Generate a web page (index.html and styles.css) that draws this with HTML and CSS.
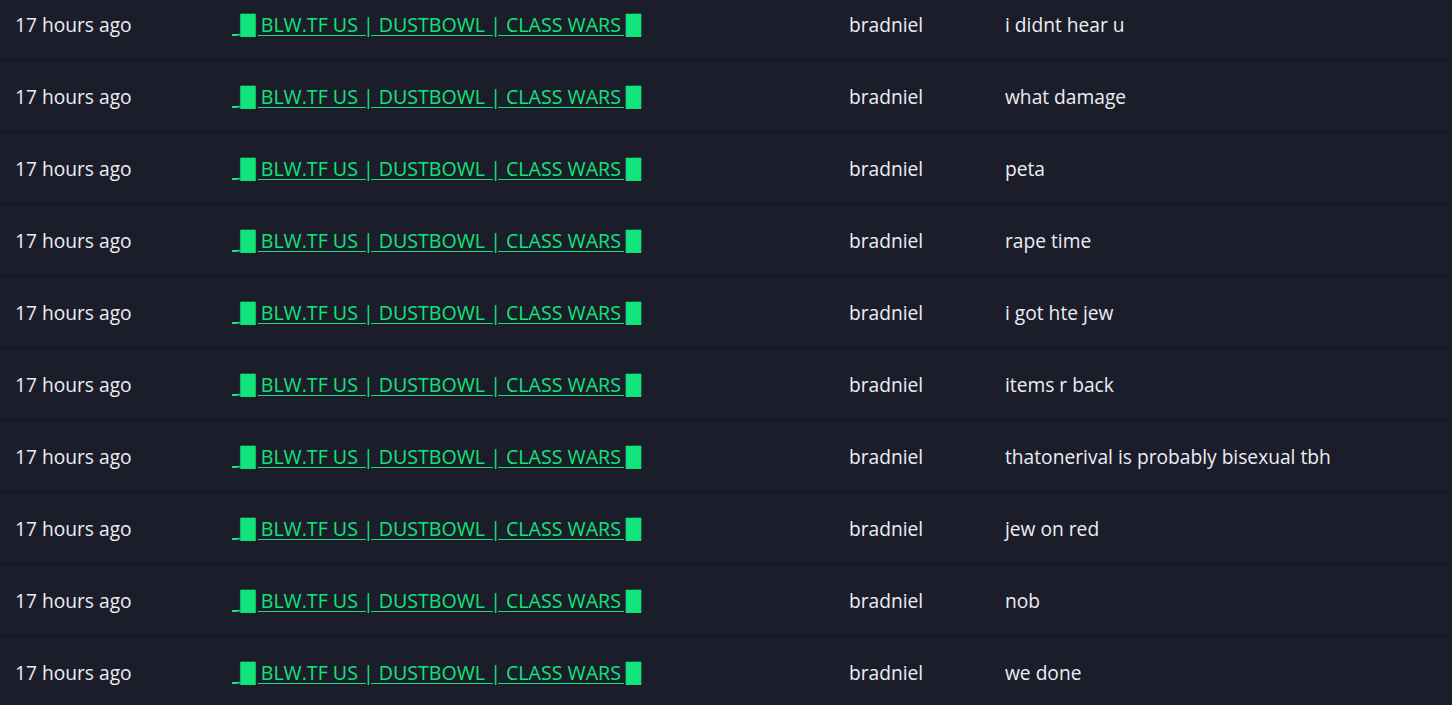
FILE: index.html
```html
<!DOCTYPE html>
<html>
<head>
<meta charset="utf-8">
<link rel="stylesheet" href="styles.css">
</head>
<body>
<div class="log">
  <div class="row"><span class="time">17 hours ago</span><a class="server" href="#">_█ BLW.TF US | DUSTBOWL | CLASS WARS █</a><span class="user">bradniel</span><span class="msg">i didnt hear u</span></div>
  <div class="row"><span class="time">17 hours ago</span><a class="server" href="#">_█ BLW.TF US | DUSTBOWL | CLASS WARS █</a><span class="user">bradniel</span><span class="msg">what damage</span></div>
  <div class="row"><span class="time">17 hours ago</span><a class="server" href="#">_█ BLW.TF US | DUSTBOWL | CLASS WARS █</a><span class="user">bradniel</span><span class="msg">peta</span></div>
  <div class="row"><span class="time">17 hours ago</span><a class="server" href="#">_█ BLW.TF US | DUSTBOWL | CLASS WARS █</a><span class="user">bradniel</span><span class="msg">rape time</span></div>
  <div class="row"><span class="time">17 hours ago</span><a class="server" href="#">_█ BLW.TF US | DUSTBOWL | CLASS WARS █</a><span class="user">bradniel</span><span class="msg">i got hte jew</span></div>
  <div class="row"><span class="time">17 hours ago</span><a class="server" href="#">_█ BLW.TF US | DUSTBOWL | CLASS WARS █</a><span class="user">bradniel</span><span class="msg">items r back</span></div>
  <div class="row"><span class="time">17 hours ago</span><a class="server" href="#">_█ BLW.TF US | DUSTBOWL | CLASS WARS █</a><span class="user">bradniel</span><span class="msg">thatonerival is probably bisexual tbh</span></div>
  <div class="row"><span class="time">17 hours ago</span><a class="server" href="#">_█ BLW.TF US | DUSTBOWL | CLASS WARS █</a><span class="user">bradniel</span><span class="msg">jew on red</span></div>
  <div class="row"><span class="time">17 hours ago</span><a class="server" href="#">_█ BLW.TF US | DUSTBOWL | CLASS WARS █</a><span class="user">bradniel</span><span class="msg">nob</span></div>
  <div class="row"><span class="time">17 hours ago</span><a class="server" href="#">_█ BLW.TF US | DUSTBOWL | CLASS WARS █</a><span class="user">bradniel</span><span class="msg">we done</span></div>
</div>
</body>
</html>
```
FILE: styles.css
```css
html, body {
  margin: 0;
  padding: 0;
  background: #1b1d2a;
  overflow: hidden;
}
body {
  font-family: "Open Sans", "DejaVu Sans", sans-serif;
  font-size: 19.2px;
  color: #eceef4;
}
.log {
  margin-top: -11px;
}
.row {
  display: grid;
  grid-template-columns: 217px 617px 156px 1fr;
  align-items: center;
  height: 70px;
  padding-left: 15px;
  border-bottom: 2px solid #171924;
  white-space: nowrap;
}
.server {
  font-size: 19.6px;
  color: #10e47a;
  text-decoration: underline;
  text-underline-offset: 3px;
}
```
